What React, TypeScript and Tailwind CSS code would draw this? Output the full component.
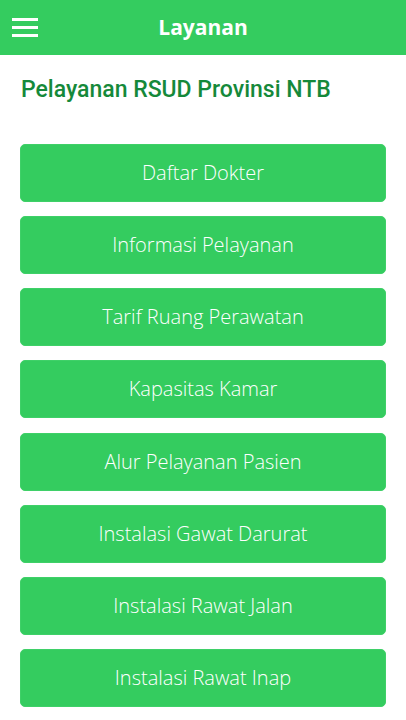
import React from 'react';

const menus = [
  'Daftar Dokter',
  'Informasi Pelayanan',
  'Tarif Ruang Perawatan',
  'Kapasitas Kamar',
  'Alur Pelayanan Pasien',
  'Instalasi Gawat Darurat',
  'Instalasi Rawat Jalan',
  'Instalasi Rawat Inap',
];

export default function App() {
  return (
    <div className="w-[406px] h-[720px] overflow-hidden bg-white">
      {/* Top bar */}
      <header className="relative h-[55px] bg-[#34cc5f] flex items-center justify-center">
        <button className="absolute left-[12px] top-[18px] flex flex-col gap-[5px]">
          <span className="block w-[26px] h-[3px] bg-white" />
          <span className="block w-[26px] h-[3px] bg-white" />
          <span className="block w-[26px] h-[3px] bg-white" />
        </button>
        <h1 className="text-white text-[21px] font-bold font-['Open_Sans',sans-serif]">Layanan</h1>
      </header>

      {/* Content */}
      <main className="px-[20px]">
        <h2 className="pt-[18px] pl-[1px] text-[23px] leading-[34px] font-medium text-[#15893a] font-['Roboto',sans-serif]">
          Pelayanan RSUD Provinsi NTB
        </h2>

        <div className="mt-[37px] flex flex-col gap-[14.15px]">
          {menus.map((m) => (
            <button
              key={m}
              className="h-[58px] w-full rounded-[5px] bg-[#34cc5f] border border-[#3fd068] text-white text-[20px] font-light font-['Open_Sans',sans-serif]"
            >
              {m}
            </button>
          ))}
        </div>
      </main>
    </div>
  );
}
